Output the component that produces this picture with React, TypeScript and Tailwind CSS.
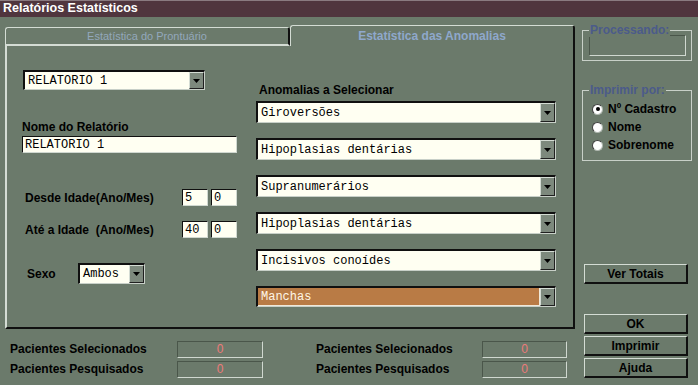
import React from "react";

const BG = "bg-[#6b7a6b]";

function Arrow() {
  return (
    <div className="w-[15px] h-full shrink-0 bg-[#7d897d] border-t border-l border-t-[#d4dcd4] border-l-[#d4dcd4] border-b border-r border-b-[#202020] border-r-[#202020] flex items-center justify-center">
      <svg width="7" height="4" viewBox="0 0 7 4">
        <path d="M0 0H7L3.5 4Z" fill="#000" />
      </svg>
    </div>
  );
}

function Combo({ text, w, h = 22, selected = false }: { text: string; w: string; h?: number; selected?: boolean }) {
  return (
    <div
      className={`${w} flex border-t-2 border-l-2 border-t-[#101010] border-l-[#101010] border-b border-r border-b-[#c8d0c8] border-r-[#c8d0c8] bg-[#fffff2]`}
      style={{ height: h }}
    >
      <div
        className={`flex-1 flex items-center pl-[3px] font-['Liberation_Mono',monospace] text-[12px] ${
          selected ? "bg-[#b97b45] text-[#fff6e6] border-r border-b border-[#f0e8d8]" : "text-black"
        }`}
      >
        {text}
      </div>
      <Arrow />
    </div>
  );
}

function Input({ text, w }: { text: string; w: string }) {
  return (
    <div
      className={`${w} h-[17px] flex items-center pl-[2px] bg-[#fffff2] border-t border-l border-t-[#101010] border-l-[#101010] border-b border-r border-b-[#d0d8d0] border-r-[#d0d8d0] font-['Liberation_Mono',monospace] text-[12px] text-black`}
    >
      {text}
    </div>
  );
}

function Button({ label }: { label: string }) {
  return (
    <div className="w-[104px] h-[20px] flex items-center justify-center border-t border-l border-t-[#d4dcd4] border-l-[#d4dcd4] border-b-2 border-r-2 border-b-[#101010] border-r-[#101010] text-[12px] font-bold text-black">
      {label}
    </div>
  );
}

function Radio({ label, checked = false }: { label: string; checked?: boolean }) {
  return (
    <div className="flex items-center h-[18px]">
      <div className="w-[11px] h-[11px] rounded-full bg-white border border-t-[#404040] border-l-[#404040] border-b-[#b0b8b0] border-r-[#b0b8b0] flex items-center justify-center ml-[9px]">
        {checked && <div className="w-[4px] h-[4px] rounded-full bg-black" />}
      </div>
      <span className="ml-[5px] text-[12px] font-bold text-black">{label}</span>
    </div>
  );
}

function StatBox() {
  return (
    <div className="h-[17px] flex items-center justify-center border-t border-l border-t-[#4a564a] border-l-[#4a564a] border-b border-r border-b-[#d0d8d0] border-r-[#d0d8d0] text-[12px] text-[#ec7a7a]">
      0
    </div>
  );
}

function StatGroup({ labelW, boxW }: { labelW: string; boxW: string }) {
  return (
    <div className="flex flex-col gap-[2px]">
      <div className="flex items-center">
        <div className={`${labelW} text-[12px] font-bold text-black`}>Pacientes Selecionados</div>
        <div className={boxW}>
          <StatBox />
        </div>
      </div>
      <div className="flex items-center">
        <div className={`${labelW} text-[12px] font-bold text-black`}>Pacientes Pesquisados</div>
        <div className={boxW}>
          <StatBox />
        </div>
      </div>
    </div>
  );
}

export default function App() {
  return (
    <div className={`w-[698px] h-[385px] ${BG} flex flex-col font-['Liberation_Sans',Arial,sans-serif] overflow-hidden`}>
      <div className="h-[17px] bg-[#50353e] border-t border-t-[#8a7a80] text-white font-bold text-[12.5px] leading-[15px] pl-[3px]">
        Relatórios Estatísticos
      </div>
      <div className="flex flex-1">
        {/* Left area */}
        <div className="w-[575px] pl-[5px] pt-[8px] flex flex-col">
          {/* Tabs */}
          <div className="flex items-end h-[21px]">
            <div className="w-[285px] h-[19px] rounded-tl-[3px] rounded-tr-[3px] border-t border-l border-t-[#d4dcd4] border-l-[#d4dcd4] border-r-2 border-r-[#101010] border-b-2 border-b-[#d4dcd4] flex items-center justify-center text-[11px] text-[#93a8bc]">
              Estatística do Prontuário
            </div>
            <div className="w-[285px] h-[21px] rounded-tl-[3px] rounded-tr-[3px] border-t border-l border-t-[#d4dcd4] border-l-[#d4dcd4] border-r-2 border-r-[#101010] flex items-center justify-center text-[12px] font-bold text-[#8fa8cc] pb-[1px]">
              Estatística das Anomalias
            </div>
          </div>
          {/* Panel */}
          <div className="h-[283px] w-[570px] border-l-2 border-l-[#d4dcd4] border-r-2 border-r-[#101010] border-b-2 border-b-[#101010] pl-[15px] flex">
            {/* Left column */}
            <div className="w-[215px] flex flex-col">
              <div className="mt-[24px] ml-[1px]">
                <Combo text="RELATORIO 1" w="w-[182px]" h={20} />
              </div>
              <div className="mt-[30px] h-[14px] leading-[14px] text-[12px] font-bold text-black">Nome do Relatório</div>
              <div className="mt-[2px]">
                <Input text="RELATORIO 1" w="w-[215px]" />
              </div>
              <div className="mt-[36px] flex items-center h-[17px]">
                <div className="w-[160px] pl-[3px] text-[12px] font-bold text-black">Desde Idade(Ano/Mes)</div>
                <Input text="5" w="w-[26px]" />
                <div className="w-[3px]" />
                <Input text="0" w="w-[26px]" />
              </div>
              <div className="mt-[15px] flex items-center h-[17px]">
                <div className="w-[160px] pl-[3px] text-[12px] font-bold text-black whitespace-pre">Até a Idade  (Ano/Mes)</div>
                <Input text="40" w="w-[26px]" />
                <div className="w-[3px]" />
                <Input text="0" w="w-[26px]" />
              </div>
              <div className="mt-[25px] flex items-center h-[21px]">
                <div className="w-[56px] pl-[5px] text-[12px] font-bold text-black">Sexo</div>
                <Combo text="Ambos" w="w-[67px]" h={21} />
              </div>
            </div>
            {/* Middle column */}
            <div className="ml-[19px] w-[300px] flex flex-col">
              <div className="mt-[37px] h-[14px] leading-[14px] pl-[3px] text-[12px] font-bold text-black">Anomalias a Selecionar</div>
              <div className="mt-[4px] flex flex-col gap-[15px]">
                <Combo text="Giroversões" w="w-[300px]" />
                <Combo text="Hipoplasias dentárias" w="w-[300px]" />
                <Combo text="Supranumerários" w="w-[300px]" />
                <Combo text="Hipoplasias dentárias" w="w-[300px]" />
                <Combo text="Incisivos conoídes" w="w-[300px]" />
                <Combo text="Manchas" w="w-[300px]" h={21} selected />
              </div>
            </div>
          </div>
          {/* Stats */}
          <div className="mt-[11px] flex">
            <div className="pl-[5px]">
              <StatGroup labelW="w-[167px]" boxW="w-[86px]" />
            </div>
            <div className="ml-[53px]">
              <StatGroup labelW="w-[166px]" boxW="w-[85px]" />
            </div>
          </div>
        </div>
        {/* Right column */}
        <div className="pl-[7px] w-[117px] flex flex-col">
          <div className="relative mt-[13px] h-[31px] w-[110px] border border-[#c8d0c8] px-[6px] pt-[4px]">
            <div className={`absolute -top-[8px] left-[6px] ${BG} px-[1px] text-[12px] leading-[14px] font-bold text-[#4b5b8a]`}>
              Processando:
            </div>
            <div className="h-[21px] w-[97px] border border-t-[#4a564a] border-l-[#4a564a] border-b-[#d0d8d0] border-r-[#d0d8d0]" />
          </div>
          <div className="relative mt-[29px] h-[71px] w-[110px] border border-[#c8d0c8] pt-[9px]">
            <div className={`absolute -top-[8px] left-[6px] ${BG} px-[1px] text-[12px] leading-[14px] font-bold text-[#4b5b8a]`}>
              Imprimir por:
            </div>
            <Radio label="Nº Cadastro" checked />
            <Radio label="Nome" />
            <Radio label="Sobrenome" />
          </div>
          <div className="mt-[103px] ml-[2px]">
            <Button label="Ver Totais" />
          </div>
          <div className="mt-[30px] ml-[2px] flex flex-col gap-[2px]">
            <Button label="OK" />
            <Button label="Imprimir" />
            <Button label="Ajuda" />
          </div>
        </div>
      </div>
    </div>
  );
}
